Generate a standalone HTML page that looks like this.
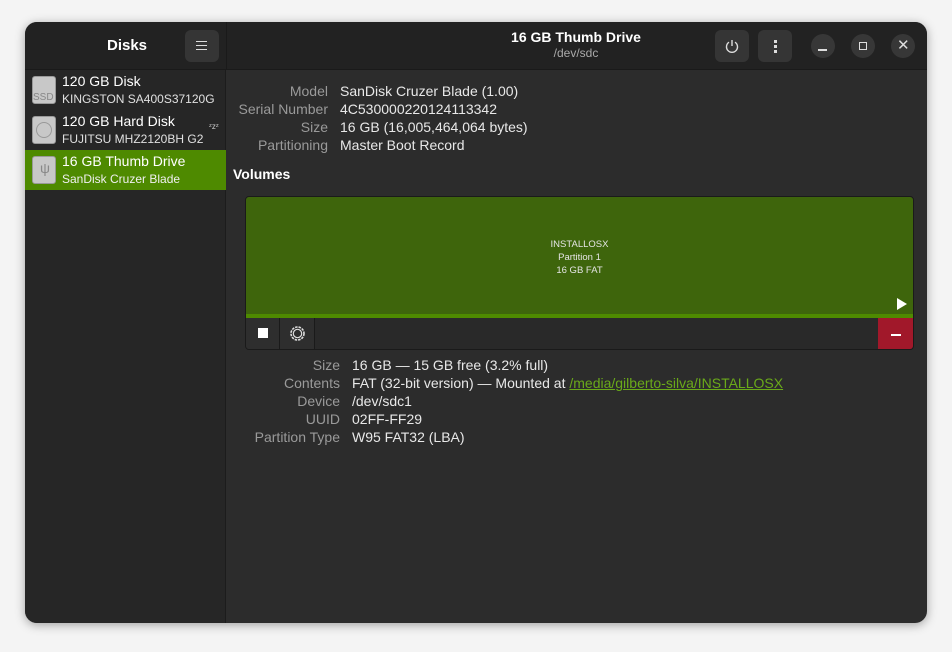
<!DOCTYPE html>
<html><head><style>
*{margin:0;padding:0;box-sizing:border-box}
body{width:952px;height:652px;background:#f4f4f4;font-family:"Liberation Sans","DejaVu Sans",sans-serif;position:relative;overflow:hidden;color:#fff}
.win{position:absolute;left:25px;top:22px;width:902px;height:601px;border-radius:12px;background:#2c2c2c;overflow:hidden;box-shadow:0 2px 10px rgba(0,0,0,.35)}
.hdr{position:absolute;left:0;top:0;width:902px;height:48px;background:#222;border-bottom:1px solid #1a1a1a}
.side{position:absolute;left:0;top:48px;width:201px;height:553px;background:#262626;border-right:1px solid #1c1c1c}
.hs{position:absolute;left:201px;top:0;width:1px;height:48px;background:#1a1a1a}
.a{position:absolute;white-space:nowrap}
.btn{position:absolute;width:34px;height:32px;border-radius:6px;background:#353535}
.cb{position:absolute;width:24px;height:24px;border-radius:12px;background:#373737}
.lbl{color:#9a9a9a;text-align:right;font-size:14px}
.val{font-size:14px;color:#e8e8e8}
.ico{position:absolute;left:7px;width:24px;height:28px;border-radius:3px;background:#c8c8c8;border:1px solid #999}
</style></head><body>
<div class="win">
<div class="hdr"></div><div class="hs"></div>
<div class="a" style="left:82px;top:15px;font-size:15px;font-weight:bold">Disks</div>
<div class="btn" style="left:160px;top:8px"></div>
<div class="a" style="left:171px;top:19px;width:11px;height:1px;background:#ddd;box-shadow:0 4px 0 #ddd,0 8px 0 #ddd"></div>
<div class="a" style="left:0;width:1102px;top:7px;text-align:center;font-size:14px;font-weight:bold">16 GB Thumb Drive</div>
<div class="a" style="left:0;width:1102px;top:24px;text-align:center;font-size:12px;color:#aaa">/dev/sdc</div>
<div class="btn" style="left:690px;top:8px"></div>
<svg class="a" style="left:699px;top:16px" width="16" height="16" viewBox="0 0 16 16"><path d="M5 4.2A5.5 5.5 0 1 0 11 4.2M8 2V8" stroke="#ddd" stroke-width="1.4" fill="none"/></svg>
<div class="btn" style="left:733px;top:8px"></div>
<div class="a" style="left:749px;top:18px;width:3px;height:3px;background:#ddd;box-shadow:0 5px 0 #ddd,0 10px 0 #ddd"></div>
<div class="cb" style="left:786px;top:12px"></div><div class="a" style="left:793px;top:27px;width:9px;height:1.5px;background:#ddd"></div>
<div class="cb" style="left:826px;top:12px"></div><div class="a" style="left:834px;top:20px;width:8px;height:8px;border:1.5px solid #ddd"></div>
<div class="cb" style="left:866px;top:12px"></div><div class="a" style="left:872px;top:14px;font-size:15px;color:#ddd">✕</div>
<div class="side"></div>
<div class="ico" style="top:54px"><span class="a" style="left:0;top:15px;font-size:10px;color:#888">SSD</span></div>
<div class="a" style="left:37px;top:51px;font-size:14px">120 GB Disk</div>
<div class="a" style="left:37px;top:70px;font-size:12px;color:#e0e0e0">KINGSTON SA400S37120G</div>
<div class="ico" style="top:94px"><span class="a" style="left:3px;top:5px;width:16px;height:16px;border-radius:8px;border:1px solid #999"></span></div>
<div class="a" style="left:37px;top:91px;font-size:14px">120 GB Hard Disk</div>
<div class="a" style="left:37px;top:110px;font-size:12px;color:#e0e0e0">FUJITSU MHZ2120BH G2</div>
<div class="a" style="left:184px;top:100px;font-size:8px;color:#ccc">ᶻzᶻ</div>
<div class="a" style="left:0;top:128px;width:201px;height:40px;background:#4e8a00"></div>
<div class="ico" style="top:134px"><span class="a" style="left:7px;top:3px;font-size:14px;color:#888">ψ</span></div>
<div class="a" style="left:37px;top:131px;font-size:14px">16 GB Thumb Drive</div>
<div class="a" style="left:37px;top:150px;font-size:12px;color:#f0f0f0">SanDisk Cruzer Blade</div>
<div class="a lbl" style="left:202px;width:101px;top:60px;line-height:18px">Model<br>Serial Number<br>Size<br>Partitioning</div>
<div class="a val" style="left:315px;top:60px;line-height:18px">SanDisk Cruzer Blade (1.00)<br>4C530000220124113342<br>16 GB (16,005,464,064 bytes)<br>Master Boot Record</div>
<div class="a" style="left:208px;top:144px;font-size:14px;font-weight:bold">Volumes</div>
<div class="a" style="left:220px;top:174px;width:669px;height:154px;border:1px solid #1a1a1a;border-radius:4px;background:#292929;overflow:hidden">
 <div class="a" style="left:0;top:0;width:667px;height:121px;background:#3e650c;border-bottom:4px solid #4e8a00"></div>
 <div class="a" style="left:0;width:667px;top:41px;text-align:center;font-size:9.5px;line-height:13px;color:#e5e5e5">INSTALLOSX<br>Partition 1<br>16 GB FAT</div>
 <div class="a" style="left:651px;top:101px;width:0;height:0;border-left:10px solid #fff;border-top:6px solid transparent;border-bottom:6px solid transparent"></div>
 <div class="a" style="left:0;top:121px;width:34px;height:32px;border-right:1px solid #1a1a1a;background:#2e2e2e"></div>
 <div class="a" style="left:12px;top:131px;width:10px;height:10px;background:#fff"></div>
 <div class="a" style="left:34px;top:121px;width:35px;height:32px;border-right:1px solid #1a1a1a;background:#2e2e2e"></div>
 <svg class="a" style="left:43px;top:128px" width="17" height="17" viewBox="0 0 17 17"><circle cx="8.5" cy="8.5" r="6.5" stroke="#ddd" stroke-width="1.6" fill="none" stroke-dasharray="2.5 1"/><circle cx="8.5" cy="8.5" r="4.2" stroke="#ddd" stroke-width="1.2" fill="none"/></svg>
 <div class="a" style="left:632px;top:121px;width:35px;height:32px;background:#a1182a"></div>
 <div class="a" style="left:645px;top:137px;width:10px;height:1.5px;background:#fff"></div>
</div>
<div class="a lbl" style="left:202px;width:113px;top:334px;line-height:18px">Size<br>Contents<br>Device<br>UUID<br>Partition Type</div>
<div class="a val" style="left:327px;top:334px;line-height:18px">16 GB — 15 GB free (3.2% full)<br>FAT (32-bit version) — Mounted at <span style="color:#6aaa1a;text-decoration:underline">/media/gilberto-silva/INSTALLOSX</span><br>/dev/sdc1<br>02FF-FF29<br>W95 FAT32 (LBA)</div>
</div>
</body></html>
